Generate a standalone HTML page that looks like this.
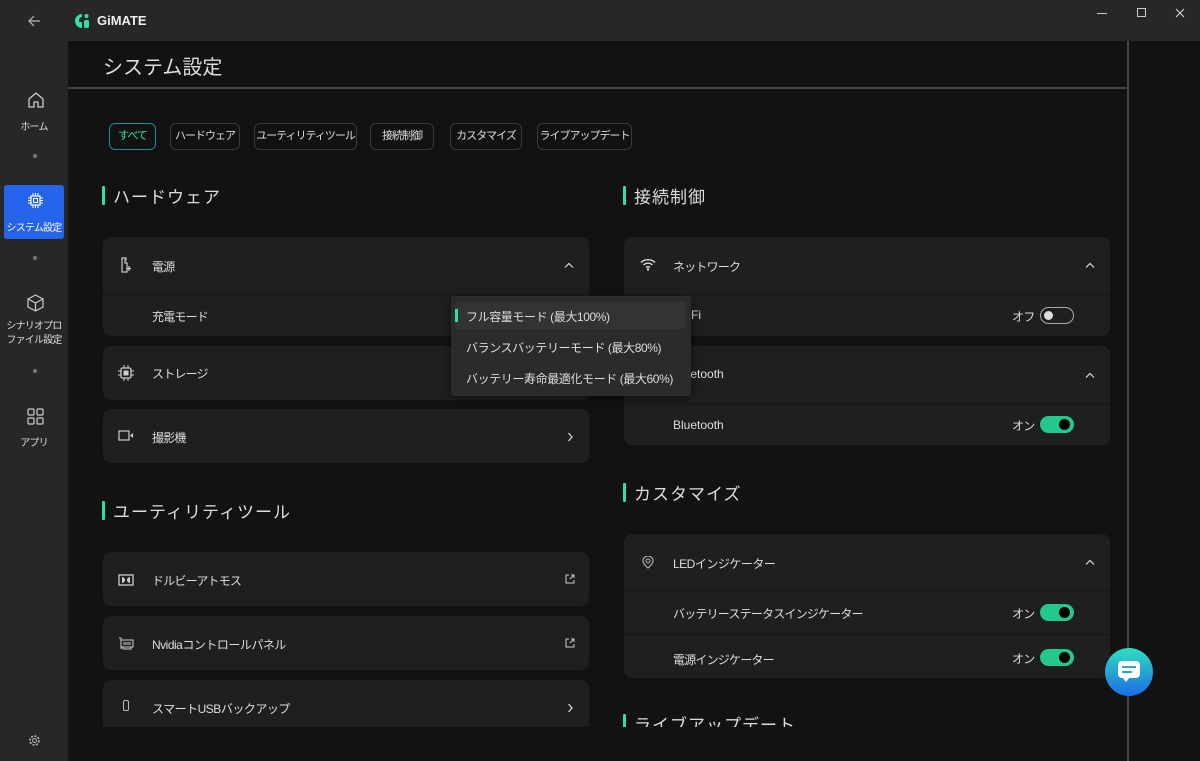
<!DOCTYPE html><html><head><meta charset="utf-8"><style>
*{box-sizing:border-box;margin:0;padding:0}
body{width:1200px;height:761px;overflow:hidden;background:#272727;font-family:"Liberation Sans","Noto Sans CJK JP",sans-serif;color:#e6e6e6;position:relative}
.a{position:absolute}
.main{left:68px;top:41px;width:1132px;height:720px;background:#121212}
.tab{position:absolute;top:123px;height:27px;border:1px solid #3a3a3a;border-radius:6px;font-size:11px;line-height:25px;text-align:center;color:#ddd;white-space:nowrap;letter-spacing:-1px;overflow:hidden}
.h{position:absolute;font-size:17px;color:#ddd;padding-left:11px;letter-spacing:1px;white-space:nowrap}
.h:before{content:"";position:absolute;left:0;top:3px;width:3px;height:19px;background:#2de0a7;border-radius:1px}
.card{position:absolute;background:#1f1f1f;border-radius:8px}
.t{position:absolute;font-size:12px;color:#ddd;white-space:nowrap;letter-spacing:-0.8px}
.dd{letter-spacing:-0.4px}
.div{position:absolute;left:0;right:0;height:1px;background:#161616}
.sb{position:absolute;width:68px;text-align:center;font-size:10px;color:#ddd;left:0;letter-spacing:-0.8px;white-space:nowrap}
.dot{position:absolute;left:33px;width:4px;height:4px;border-radius:2px;background:#777}
.tg{position:absolute;width:34px;height:17px;border-radius:9px;background:#23c88c}
.tg:after{content:"";position:absolute;right:4px;top:3px;width:11px;height:11px;border-radius:6px;background:#000}
.chev{position:absolute}
</style></head><body>
<svg width="0" height="0" style="position:absolute"><defs>
<symbol id="up" viewBox="0 0 10 6"><path d="M1 5.5L5 1.5l4 4" stroke="#ddd" stroke-width="1.2" fill="none"/></symbol>
<symbol id="rt" viewBox="0 0 6 10"><path d="M1.5 1L5 5l-3.5 4" stroke="#ddd" stroke-width="1.2" fill="none"/></symbol>
<symbol id="ext" viewBox="0 0 10 10"><path d="M4 1H1v8h8V6M6 1h3v3M9 1L5 5" stroke="#ccc" stroke-width="1" fill="none"/></symbol>
</defs></svg>
<!-- title bar -->
<svg class="a" style="left:27px;top:14px" width="14" height="14" viewBox="0 0 14 14"><path d="M13 7H2M7 2L2 7l5 5" stroke="#bbb" stroke-width="1.2" fill="none"/></svg>
<svg class="a" style="left:74px;top:13px" width="16" height="16" viewBox="0 0 16 16"><path d="M8 1A7 7 0 1 0 8 15V9H5V7a3 3 0 0 1 3-3V1z" fill="#2de0a7"/><circle cx="12.5" cy="3" r="2" fill="#2de0a7"/><rect x="10" y="7" width="5" height="8" rx="1.5" fill="#2de0a7"/></svg>
<div class="t" style="left:97px;top:13px;font-size:13px;font-weight:bold;color:#eee;letter-spacing:0">GiMATE</div>
<div class="a" style="left:1097px;top:13px;width:10px;height:1px;background:#ccc"></div>
<div class="a" style="left:1137px;top:8px;width:9px;height:9px;border:1px solid #ccc"></div>
<svg class="a" style="left:1175px;top:8px" width="10" height="10" viewBox="0 0 10 10"><path d="M1 1l8 8M9 1L1 9" stroke="#ccc" stroke-width="1.2"/></svg>
<!-- sidebar -->
<svg class="a" style="left:27px;top:91px" width="18" height="18" viewBox="0 0 18 18"><path d="M2 8L9 2l7 6v8h-5v-5H7v5H2z" stroke="#ccc" stroke-width="1.3" fill="none" stroke-linejoin="round"/></svg>
<div class="sb" style="top:118px">ホーム</div>
<div class="dot" style="top:154px"></div>
<div class="a" style="left:4px;top:185px;width:60px;height:54px;background:#2563eb;border-radius:3px"></div>
<svg class="a" style="left:28px;top:193px" width="15" height="15" viewBox="0 0 15 15"><rect x="3" y="3" width="9" height="9" stroke="#fff" fill="none" stroke-width="1.2"/><rect x="5.5" y="5.5" width="4" height="4" stroke="#fff" fill="none"/><path d="M5 0v3M7.5 0v3M10 0v3M5 12v3M7.5 12v3M10 12v3M0 5h3M0 7.5h3M0 10h3M12 5h3M12 7.5h3M12 10h3" stroke="#fff"/></svg>
<div class="sb" style="top:219px;color:#fff">システム設定</div>
<div class="dot" style="top:256px"></div>
<svg class="a" style="left:27px;top:294px" width="17" height="18" viewBox="0 0 17 18"><path d="M8.5 1L16 5v8l-7.5 4L1 13V5zM1 5l7.5 4L16 5M8.5 9v8" stroke="#ccc" stroke-width="1.2" fill="none"/></svg>
<div class="sb" style="top:320px;line-height:14px">シナリオプロ<br>ファイル設定</div>
<div class="dot" style="top:369px"></div>
<svg class="a" style="left:27px;top:408px" width="17" height="17" viewBox="0 0 17 17"><g stroke="#ccc" stroke-width="1.2" fill="none"><rect x="1" y="1" width="6" height="6" rx="1"/><rect x="10" y="1" width="6" height="6" rx="1"/><rect x="1" y="10" width="6" height="6" rx="1"/><rect x="10" y="10" width="6" height="6" rx="1"/></g></svg>
<div class="sb" style="top:434px">アプリ</div>
<svg class="a" style="left:28px;top:734px" width="13" height="13" viewBox="0 0 13 13"><circle cx="6.5" cy="6.5" r="2" stroke="#bbb" fill="none"/><circle cx="6.5" cy="6.5" r="4.5" stroke="#bbb" stroke-width="1.6" stroke-dasharray="2 1.5" fill="none"/></svg>
<!-- main -->
<div class="a main"></div>
<div class="a" style="left:1127px;top:41px;width:2px;height:720px;background:#444"></div>
<div class="a" style="left:68px;top:87px;width:1060px;height:2px;background:#444"></div>
<div class="t" style="left:103px;top:51px;font-size:20px;color:#ddd;letter-spacing:0">システム設定</div>
<div class="tab" style="left:109px;width:47px;border-color:#1b8fa0;color:#2de0a7">すべて</div>
<div class="tab" style="left:170px;width:70px">ハードウェア</div>
<div class="tab" style="left:254px;width:103px">ユーティリティツール</div>
<div class="tab" style="left:370px;width:64px">接続制御</div>
<div class="tab" style="left:450px;width:72px">カスタマイズ</div>
<div class="tab" style="left:537px;width:95px">ライブアップデート</div>
<div style="position:absolute;left:0;top:0;width:1127px;height:727px;overflow:hidden">
<div class="h" style="left:102px;top:183px">ハードウェア</div>
<div class="card" style="left:103px;top:237px;width:486px;height:99px"><div class="div" style="top:57px"></div></div>
<svg class="a" style="left:120px;top:257px" width="12" height="16" viewBox="0 0 12 16"><path d="M2 1h4v2H5v3h2v9H2z" stroke="#ccc" stroke-width="1.2" fill="none"/><path d="M9 9v5M7 11.5h4" stroke="#ccc" stroke-width="1.2"/></svg>
<div class="t" style="left:152px;top:258px">電源</div><svg class="chev" style="left:564px;top:262px" width="10" height="6"><use href="#up"/></svg>
<div class="t" style="left:152px;top:308px">充電モード</div>
<div class="card" style="left:103px;top:346px;width:486px;height:54px"></div>
<svg class="a" style="left:118px;top:365px" width="16" height="16" viewBox="0 0 16 16"><rect x="3" y="3" width="10" height="10" rx="1.5" stroke="#ccc" stroke-width="1.3" fill="none"/><rect x="5.5" y="5.5" width="5" height="5" fill="#ccc"/><path d="M6 0v3M10 0v3M6 13v3M10 13v3M0 6h3M0 10h3M13 6h3M13 10h3" stroke="#ccc"/></svg>
<div class="t" style="left:152px;top:365px">ストレージ</div>
<div class="card" style="left:103px;top:409px;width:486px;height:54px"></div>
<svg class="a" style="left:118px;top:430px" width="16" height="12" viewBox="0 0 16 12"><rect x="1" y="1" width="10" height="9" stroke="#ccc" stroke-width="1.2" fill="none"/><path d="M12 5.5L15 3v5z" fill="#ccc"/></svg>
<div class="t" style="left:152px;top:429px">撮影機</div><svg class="chev" style="left:567px;top:432px" width="6" height="10"><use href="#rt"/></svg>
<div class="h" style="left:102px;top:498px">ユーティリティツール</div>
<div class="card" style="left:103px;top:552px;width:486px;height:54px"></div>
<svg class="a" style="left:118px;top:574px" width="16" height="12" viewBox="0 0 16 12"><rect x="1" y="1" width="14" height="10" stroke="#ccc" stroke-width="1.3" fill="none"/><path d="M4 3a3 3 0 0 1 0 6zM12 3a3 3 0 0 0 0 6z" fill="#ccc"/></svg>
<div class="t" style="left:152px;top:572px">ドルビーアトモス</div><svg class="chev" style="left:565px;top:574px" width="10" height="10"><use href="#ext"/></svg>
<div class="card" style="left:103px;top:616px;width:486px;height:54px"></div>
<svg class="a" style="left:118px;top:637px" width="16" height="13" viewBox="0 0 16 13"><path d="M1 1h2v11M3 3h12v7H3M5 10v2h8v-2M6 5v3M8 5v3M10 5v3M12 5v3" stroke="#ccc" fill="none"/></svg>
<div class="t" style="left:152px;top:636px;letter-spacing:-0.5px">Nvidiaコントロールパネル</div><svg class="chev" style="left:565px;top:638px" width="10" height="10"><use href="#ext"/></svg>
<div class="card" style="left:103px;top:680px;width:486px;height:54px"></div>
<div class="a" style="left:123px;top:700px;width:6px;height:11px;border:1px solid #bbb;border-radius:2px"></div>
<div class="t" style="left:152px;top:700px;letter-spacing:-0.5px">スマートUSBバックアップ</div><svg class="chev" style="left:567px;top:703px" width="6" height="10"><use href="#rt"/></svg>

<div class="h" style="left:623px;top:183px">接続制御</div>
<div class="card" style="left:624px;top:237px;width:486px;height:99px"><div class="div" style="top:57px"></div></div>
<svg class="a" style="left:640px;top:258px" width="16" height="13" viewBox="0 0 16 13"><path d="M1 4.5a10 10 0 0 1 14 0M3.5 7a6.5 6.5 0 0 1 9 0M6 9.5a3 3 0 0 1 4 0" stroke="#ddd" stroke-width="1.4" fill="none"/><circle cx="8" cy="11.5" r="1.2" fill="#ddd"/></svg>
<div class="t" style="left:673px;top:258px">ネットワーク</div><svg class="chev" style="left:1085px;top:262px" width="10" height="6"><use href="#up"/></svg>
<div class="t" style="left:673px;top:308px;letter-spacing:0">Wi-Fi</div>
<div class="t" style="left:1012px;top:308px">オフ</div>
<div class="a" style="left:1040px;top:307px;width:34px;height:17px;border:1px solid #aaa;border-radius:9px"><div class="a" style="left:3px;top:3px;width:9px;height:9px;border-radius:5px;background:#ddd"></div></div>
<div class="card" style="left:624px;top:346px;width:486px;height:99px"><div class="div" style="top:57px"></div></div>
<div class="t" style="left:673px;top:367px;letter-spacing:0">Bluetooth</div><svg class="chev" style="left:1085px;top:372px" width="10" height="6"><use href="#up"/></svg>
<div class="t" style="left:673px;top:418px;letter-spacing:0">Bluetooth</div>
<div class="t" style="left:1012px;top:417px">オン</div><div class="tg" style="left:1040px;top:416px"></div>
<div class="h" style="left:623px;top:480px">カスタマイズ</div>
<div class="card" style="left:624px;top:534px;width:486px;height:144px"><div class="div" style="top:56px"></div><div class="div" style="top:100px"></div></div>
<svg class="a" style="left:642px;top:556px" width="12" height="13" viewBox="0 0 12 13"><path d="M6 12s-5-4-5-7a5 5 0 0 1 10 0c0 3-5 7-5 7z" stroke="#bbb" stroke-width="1.1" fill="none"/><circle cx="6" cy="5" r="2" stroke="#bbb" fill="none"/></svg>
<div class="t" style="left:673px;top:555px;letter-spacing:-0.5px">LEDインジケーター</div><svg class="chev" style="left:1085px;top:559px" width="10" height="6"><use href="#up"/></svg>
<div class="t" style="left:673px;top:605px">バッテリーステータスインジケーター</div>
<div class="t" style="left:1012px;top:605px">オン</div><div class="tg" style="left:1040px;top:604px"></div>
<div class="t" style="left:673px;top:651px">電源インジケーター</div>
<div class="t" style="left:1012px;top:650px">オン</div><div class="tg" style="left:1040px;top:649px"></div>
<div class="h" style="left:623px;top:711px">ライブアップデート</div>
</div>
<!-- dropdown -->
<div class="a" style="left:451px;top:296px;width:240px;height:100px;background:#2b2b2b;border-radius:3px;box-shadow:0 2px 8px rgba(0,0,0,.5)"></div>
<div class="a" style="left:455px;top:302px;width:231px;height:27px;background:#333;border-radius:3px"></div>
<div class="a" style="left:455px;top:309px;width:3px;height:13px;background:#2de0a7"></div>
<div class="t dd" style="left:466px;top:308px">フル容量モード (最大100%)</div>
<div class="t dd" style="left:466px;top:339px">バランスバッテリーモード (最大80%)</div>
<div class="t dd" style="left:466px;top:370px">バッテリー寿命最適化モード (最大60%)</div>
<!-- chat -->
<div class="a" style="left:1105px;top:648px;width:48px;height:48px;border-radius:24px;background:linear-gradient(#2de0c0,#1e6be6)"></div>
<div class="a" style="left:1118px;top:661px;width:22px;height:17px;background:#fff;border-radius:4px"></div>
<div class="a" style="left:1122px;top:666px;width:14px;height:2px;background:#2aa7d8"></div>
<div class="a" style="left:1122px;top:671px;width:10px;height:2px;background:#2aa7d8"></div>
<div class="a" style="left:1122px;top:677px;width:0;height:0;border-left:4px solid transparent;border-right:4px solid transparent;border-top:5px solid #fff"></div>
</body></html>
